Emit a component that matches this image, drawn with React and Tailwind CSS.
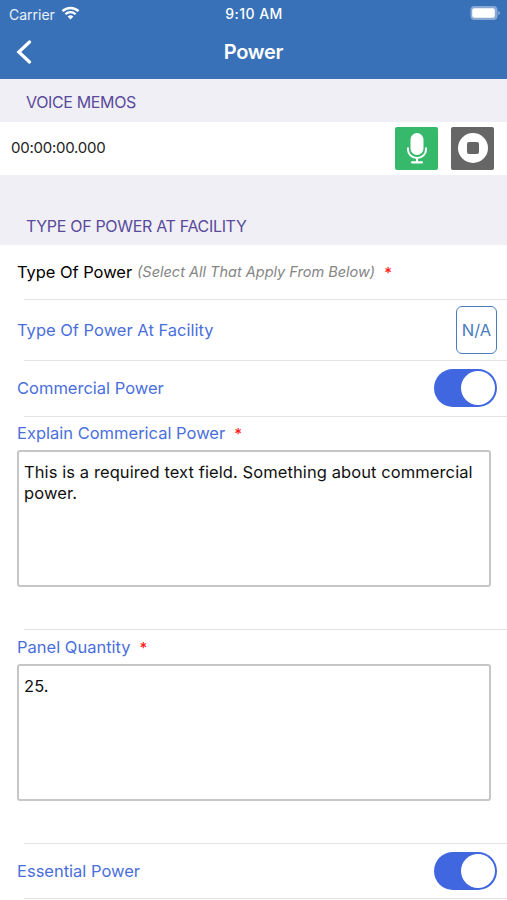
import { useState } from "react";

function StatusBar() {
  return (
    <div className="grid grid-cols-3 items-center h-7 pl-[9px] pr-[7px] text-white text-[14px]">
      <div className="flex items-center gap-1.5">
        <span className="text-white/90">Carrier</span>
        <svg className="w-[19px] h-[14px] -mt-0.5" viewBox="0 0 18 14" fill="none" stroke="currentColor">
          <path d="M1 5.2a11.4 11.4 0 0 1 16 0" strokeWidth="2.5" />
          <path d="M3.9 8.2a7.3 7.3 0 0 1 10.2 0" strokeWidth="2.3" />
          <path d="M9 13.6L6.1 10.6a4.1 4.1 0 0 1 5.8 0Z" fill="currentColor" stroke="none" />
        </svg>
      </div>
      <span className="text-center font-medium tracking-[0.45px] -ml-px -mt-px">9:10 AM</span>
      <svg className="justify-self-end w-[30px] h-[14px] -mt-0.5" viewBox="0 0 30 14" fill="none">
        <rect x="0.5" y="0" width="27" height="14" rx="4" fill="white" fillOpacity="0.4" />
        <rect x="2.2" y="2.2" width="22.6" height="9.6" rx="2" fill="white" />
        <path d="M28.3 5q1.5 0.6 1.5 2t-1.5 2Z" fill="white" fillOpacity="0.5" />
      </svg>
    </div>
  );
}

function SectionHeader({ title, className }) {
  return (
    <div className={`flex items-end bg-[#f0eff5] pl-[26px] text-[#594a9c] text-[16px] leading-5 ${className}`}>
      {title}
    </div>
  );
}

function Required() {
  return <span className="ml-[9px] text-[#ff1a1a] text-[15px] leading-none font-medium">*</span>;
}

function Toggle({ checked, onChange, label }) {
  return (
    <button
      role="switch"
      aria-checked={checked}
      aria-label={label}
      onClick={onChange}
      className={`flex items-center w-[63px] h-[38px] rounded-full p-0.5 ${checked ? "justify-end bg-[#4067e0]" : "justify-start bg-gray-300"}`}
    >
      <span className="w-[34px] h-[34px] rounded-full bg-white"></span>
    </button>
  );
}

function Divider() {
  return <div className="ml-6 h-px bg-[#e2e2e4]"></div>;
}

function ToggleRow({ label, className }) {
  const [checked, setChecked] = useState(true);

  return (
    <div className={`flex items-center justify-between pl-[17px] pr-2.5 ${className}`}>
      <span className="text-[#4a6fdc]">{label}</span>
      <Toggle checked={checked} onChange={() => setChecked(!checked)} label={label} />
    </div>
  );
}

function TextField({ label, initial, className }) {
  const [value, setValue] = useState(initial);

  return (
    <div className={`pl-[17px] pr-4 ${className}`}>
      <div className="h-[22px] leading-[22px] text-[#4a6fdc]">
        {label}
        <Required />
      </div>
      <textarea
        value={value}
        onChange={(evt) => setValue(evt.target.value)}
        className="block w-full h-[137px] mt-1.5 px-[5px] py-2.5 border-2 border-[#c6c6c6] rounded-[3px] resize-none outline-none text-[#111] leading-[21px] text-[16.5px] tracking-[0.09px]"
      />
    </div>
  );
}

function App() {
  return (
    <div className="w-full h-[900px] overflow-hidden bg-white font-['Inter',sans-serif] text-[16.5px]">
      <header className="h-[79px] bg-[#3871b8]">
        <StatusBar />
        <div className="grid grid-cols-[1fr_auto_1fr] items-center h-12 px-4 text-white">
          <svg className="w-4 h-6" viewBox="0 0 16 24" fill="none" stroke="currentColor" strokeWidth="3.2">
            <path d="M13.5 2L2.8 12l10.7 10" strokeLinecap="round" strokeLinejoin="miter" />
          </svg>
          <h1 className="text-[20px] font-semibold tracking-[-0.25px]">Power</h1>
        </div>
      </header>

      <SectionHeader title="VOICE MEMOS" className="h-[43px] pb-2.5 tracking-[-0.35px]" />

      <div className="flex items-center h-[53px] pl-[11px] pr-[13px]">
        <span className="flex-1 text-[15px] tracking-[-0.25px] text-[#222]">00:00:00.000</span>
        <button className="flex items-center justify-center w-[43px] h-[43px] -mt-px rounded-[2px] bg-[#36b96b]" aria-label="Record">
          <svg className="w-5 h-[31px]" viewBox="0 0 20 31" fill="none">
            <rect x="3.5" y="0" width="13" height="22" rx="6.5" fill="white" />
            <path d="M1 14.5v2.2a9 8.3 0 0 0 18 0v-2.2M10 25v4" stroke="white" strokeWidth="2" />
            <path d="M5 29.3h10" stroke="white" strokeWidth="2.2" strokeLinecap="round" />
          </svg>
        </button>
        <button className="flex items-center justify-center w-[43px] h-[43px] -mt-px ml-[13px] rounded-[2px] bg-[#666]" aria-label="Stop">
          <span className="flex items-center justify-center w-[30px] h-[30px] rounded-full bg-white">
            <span className="w-3 h-3 rounded-[2px] bg-[#666]"></span>
          </span>
        </button>
      </div>

      <SectionHeader title="TYPE OF POWER AT FACILITY" className="h-[70px] pb-[9px] tracking-[-0.32px]" />

      <div className="flex items-center h-[54px] pl-[17px]">
        <span className="text-black tracking-[-0.05px]">Type Of Power</span>
        <span className="ml-[5px] text-[14.5px] italic text-[#858585]">(Select All That Apply From Below)</span>
        <Required />
      </div>
      <Divider />

      <div className="flex items-center justify-between h-[60px] pl-[17px] pr-2.5">
        <span className="text-[#4a6fdc]">Type Of Power At Facility</span>
        <button className="w-[41px] h-[48px] rounded-[6px] border-[1.5px] border-[#4a7dbd] text-[#4a7dbd]">N/A</button>
      </div>
      <Divider />

      <ToggleRow label="Commercial Power" className="h-[55px] pb-px" />
      <Divider />

      <TextField
        label="Explain Commerical Power"
        initial="This is a required text field. Something about commercial power."
        className="h-[212px] pt-[5px]"
      />
      <Divider />

      <TextField label="Panel Quantity" initial="25." className="h-[213px] pt-1.5" />
      <Divider />

      <ToggleRow label="Essential Power" className="h-[54px]" />
      <Divider />
    </div>
  );
}

export default App;
